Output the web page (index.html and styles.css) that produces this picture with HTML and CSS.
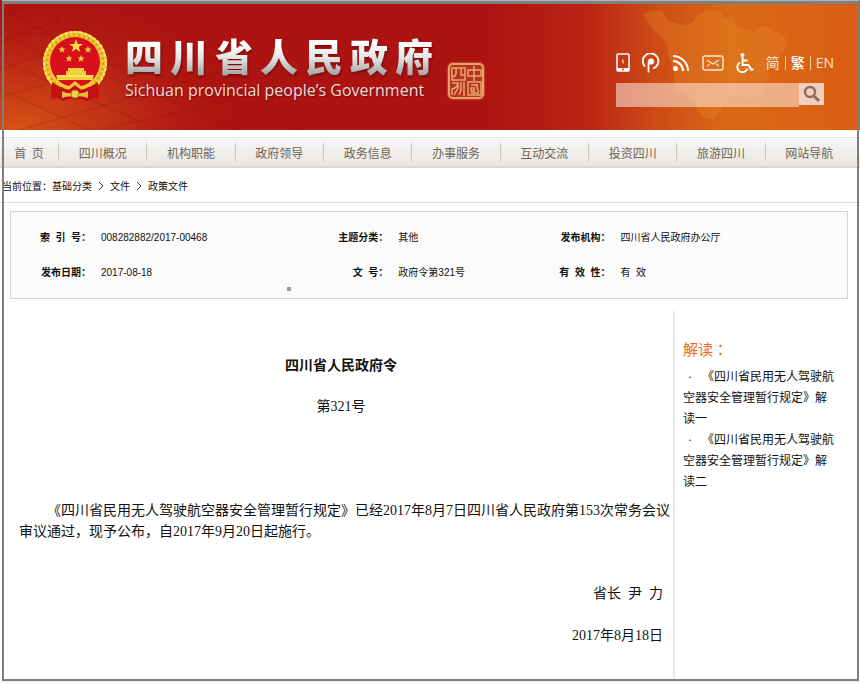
FILE: index.html
```html
<!DOCTYPE html>
<html lang="zh-CN">
<head>
<meta charset="utf-8">
<title>四川省人民政府令</title>
<link rel="stylesheet" href="styles.css">
</head>
<body>
<div class="page">
  <header class="banner">
    <svg class="banner-art" viewBox="0 0 860 131" preserveAspectRatio="none" aria-hidden="true">
      <defs>
        <radialGradient id="glowLeft" gradientUnits="userSpaceOnUse" cx="20" cy="131" r="230" gradientTransform="translate(0 52) scale(1 .6)">
          <stop offset="0" stop-color="#d65416"/>
          <stop offset=".45" stop-color="#c43417" stop-opacity=".8"/>
          <stop offset="1" stop-color="#ad1411" stop-opacity="0"/>
        </radialGradient>
        <linearGradient id="glowRight" x1="0" x2="1">
          <stop offset="0" stop-color="#ad1411"/>
          <stop offset=".26" stop-color="#ba2414"/>
          <stop offset=".45" stop-color="#cd4c16"/>
          <stop offset=".65" stop-color="#d96915"/>
          <stop offset="1" stop-color="#da5d15"/>
        </linearGradient>
      </defs>
      <rect width="860" height="131" fill="#ad1411"/>
      <rect width="300" height="131" fill="url(#glowLeft)"/>
      <rect x="490" width="370" height="131" fill="url(#glowRight)"/>
      <g fill="none" stroke="#8e1208" stroke-opacity=".16" stroke-width="2">
        <path d="M0 18 40 2M0 42 60 20M0 70 95 38M0 98 160 52M20 131 220 72M100 131 270 92M190 131 320 105"/>
        <path d="M0 8 50 34 100 62 190 84 300 131M0 34 60 62 150 92 240 131M0 60 70 92 160 131M0 90 90 131M30 4 60 22"/>
      </g>
      <path fill="#e88a28" fill-opacity=".32" d="M643 15 650 10 662 11 668 21 684 26 694 22 697 15 706 10 721 11 723 18 733 18 737 28 753 32 760 26 770 28 786 39 786 49 777 57 779 66 768 70 770 80 760 84 762 96 748 100 733 95 726 101 720 112 713 121 702 119 695 104 686 96 674 91 674 73 669 58 667 43 657 34 650 25Z"/>
    </svg>

    <div class="brand">
      <svg class="emblem" viewBox="0 0 66 72" role="img" aria-label="国徽">
        <circle cx="33" cy="33" r="32" fill="#f3c62d"/>
        <circle cx="33" cy="33" r="28" fill="none" stroke="#d3a02a" stroke-width="3" stroke-dasharray="2 3"/>
        <circle cx="33" cy="33" r="31" fill="none" stroke="#fbea70" stroke-width="2" stroke-dasharray="3 2"/>
        <circle cx="33" cy="32" r="25" fill="#d8101b"/>
        <path fill="#f8dc3c" d="m34 9 1.700 5H41l-4.300 3.100L38.300 22 34 19l-4.300 3 1.600-4.900L27 14h5.300Z"/>
        <g fill="#f4d03c">
          <path id="star" d="m20 16 1 2.500h2.500l-2 1.700.8 2.600-2.300-1.600-2.300 1.600.8-2.600-2-1.700H19Z"/>
          <use href="#star" x="26"/><use href="#star" x="7" y="9"/><use href="#star" x="19" y="9"/>
          <path d="M26 38h16v3h2v4h7v5H15v-5h9v-4h2Z"/>
        </g>
        <path d="M14 46h38" stroke="#fff19a"/>
        <path d="M10 52 9 69l6-1 6 3 6-2h12l6 2 6-3 6 1-1-17-8 5H18Z" fill="#c4100f"/>
        <path d="M15 51q8 8 12 7l6-5 6 5q4 1 12-7" fill="none" stroke="#edc437" stroke-width="3"/>
        <path d="M20 61q7 4 13 1 6 3 13-1v7q-7-3-13-1-6-2-13 1Z" fill="#e8c040"/>
        <circle cx="33" cy="64" r="4" fill="#f1d04a" stroke="#b8860e"/>
      </svg>
      <div class="brand-text">
        <h1 class="site-name"><span>四</span><span>川</span><span>省</span><span>人</span><span>民</span><span>政</span><span>府</span></h1>
        <p class="site-name-en">Sichuan provincial people’s Government</p>
      </div>
      <svg class="seal" viewBox="0 0 38 38" role="img" aria-label="中国四川">
        <rect x="2" y="2" width="34" height="34" rx="4" fill="#b7331d" stroke="#e9a068" stroke-width="2"/>
        <g fill="none" stroke="#e6a871" stroke-width="1.500">
          <path d="M5 6h13v12H5ZM9 6v5q0 3-3 4M14 6v7h4M21 8h13v6H21ZM27 4v15M5 21h6q-1 5-6 6v6M11 21v5l-4 7M14 20v8l-2 5M17 20v14M21 20h13v13H21ZM24 23h7M24 26h3v3h-3ZM30 22v4l2 4M24 31h8"/>
        </g>
      </svg>
    </div>

    <div class="tools">
      <nav class="quick" aria-label="快捷入口">
        <a href="#" aria-label="手机版"><svg width="14" height="20" viewBox="0 0 14 20"><rect x="1" y="1" width="12" height="17" rx="1" fill="none" stroke="#fff" stroke-width="1.500"/><path d="M1 15h12v3H1Z" fill="#fff"/><path d="M7 6 6 9l2-1-1 3" fill="none" stroke="#f3c0a0"/><circle cx="7" cy="16.500" r="1" fill="#c33c16"/></svg></a>
        <a href="#" aria-label="微博"><svg width="18" height="20" viewBox="0 0 18 20"><path d="M3 13.500A7.800 7.800 0 1 1 11 15.500M6.500 19.500V9" fill="none" stroke="#fff" stroke-width="1.800"/><circle cx="9" cy="8.500" r="3" fill="#fff"/></svg></a>
        <a href="#" aria-label="RSS订阅"><svg width="18" height="18" viewBox="0 0 18 18"><circle cx="3.500" cy="14.500" r="2.500" fill="#fff"/><path d="M1 7a10 10 0 0 1 10 10M1 2a15 15 0 0 1 15 15" fill="none" stroke="#fff" stroke-width="2"/></svg></a>
        <a href="#" aria-label="邮箱"><svg width="22" height="16" viewBox="0 0 22 16"><rect x="1" y="1" width="20" height="14" rx="2" fill="none" stroke="#fbe3cd" stroke-width="1.500"/><path d="m5 5 6 4 6-4M5 11l3-2M17 11l-3-2" fill="none" stroke="#fbe3cd" stroke-width="1.200"/></svg></a>
        <a href="#" aria-label="无障碍"><svg width="18" height="20" viewBox="0 0 18 20"><circle cx="6.500" cy="2" r="2" fill="#fff"/><path d="M6.500 4v8h6l3 5 2-1M6.500 7.500h5M4 9.500a5.200 5.200 0 1 0 7.500 6" fill="none" stroke="#fff" stroke-width="1.900"/></svg></a>
        <span class="langs"><a href="#">简</a><i></i><a href="#" class="on">繁</a><i></i><a href="#">EN</a></span>
      </nav>
      <form class="search">
        <input type="text" aria-label="搜索">
        <button type="button" aria-label="搜索"><svg width="18" height="18" viewBox="0 0 18 18"><circle cx="7" cy="7" r="5" fill="none" stroke="#96695a" stroke-width="2.400"/><path d="m11 11 5 5" stroke="#96695a" stroke-width="3"/></svg></button>
      </form>
    </div>
  </header>

  <nav class="menu" aria-label="主导航">
    <a href="#" class="home">首&nbsp; 页</a>
    <a href="#">四川概况</a>
    <a href="#">机构职能</a>
    <a href="#">政府领导</a>
    <a href="#">政务信息</a>
    <a href="#">办事服务</a>
    <a href="#">互动交流</a>
    <a href="#">投资四川</a>
    <a href="#">旅游四川</a>
    <a href="#">网站导航</a>
  </nav>

  <div class="crumbs">
    <span>当前位置：</span><a href="#">基础分类</a><svg width="6" height="8" viewBox="0 0 6 8"><path d="m1 0 4 4-4 4" fill="none" stroke="#333"/></svg><a href="#">文件</a><svg width="6" height="8" viewBox="0 0 6 8"><path d="m1 0 4 4-4 4" fill="none" stroke="#333"/></svg><a href="#">政策文件</a>
  </div>

  <section class="meta">
    <table>
      <colgroup>
        <col class="label"><col class="wide"><col class="label"><col class="mid"><col class="label"><col>
      </colgroup>
      <tr>
        <th scope="row">索&nbsp; 引&nbsp; 号：</th><td>008282882/2017-00468</td>
        <th scope="row">主题分类：</th><td>其他</td>
        <th scope="row">发布机构：</th><td>四川省人民政府办公厅</td>
      </tr>
      <tr>
        <th scope="row">发布日期：</th><td>2017-08-18</td>
        <th scope="row">文&nbsp; 号：</th><td>政府令第321号</td>
        <th scope="row">有&nbsp; 效&nbsp; 性：</th><td>有&nbsp; 效</td>
      </tr>
    </table>
    <span class="dot"></span>
  </section>

  <div class="content">
    <article class="decree">
      <h2>四川省人民政府令</h2>
      <p class="number">第321号</p>
      <p class="text">《四川省民用无人驾驶航空器安全管理暂行规定》已经2017年8月7日四川省人民政府第153次常务会议审议通过，现予公布，自2017年9月20日起施行。</p>
      <p class="sign">省长&nbsp; 尹&nbsp; 力</p>
      <p class="sign">2017年8月18日</p>
    </article>
    <aside class="related">
      <h3>解读：</h3>
      <ul>
        <li><a href="#">《四川省民用无人驾驶航空器安全管理暂行规定》解读一</a></li>
        <li><a href="#">《四川省民用无人驾驶航空器安全管理暂行规定》解读二</a></li>
      </ul>
    </aside>
  </div>
</div>
</body>
</html>
```
FILE: styles.css
```css
* {
  box-sizing: border-box;
}

body {
  margin: 0;
  background: #fff;
  color: #111;
  font-family: "Liberation Serif", "Noto Sans CJK SC", sans-serif;
}

h1, h2, h3, p, ul {
  margin: 0;
  padding: 0;
}

a {
  color: inherit;
  text-decoration: none;
}

svg {
  display: block;
}

.page {
  position: relative;
  display: flex;
  flex-direction: column;
  min-height: 100vh;
}

/* grey window frame drawn over the page edges */
.page::after {
  content: "";
  position: absolute;
  inset: 1px 1px 2px 2px;
  border: 2px solid #7f7f7f;
  border-top-width: 3px;
  box-shadow: 0 -1px #b4b4b4, 0 2px #eee;
  pointer-events: none;
}

/* banner */
.banner {
  position: relative;
  display: flex;
  justify-content: space-between;
  height: 130px;
  padding: 0 26px 0 42px;
}

.banner-art {
  position: absolute;
  inset: 0;
  width: 100%;
  height: 100%;
}

.brand {
  position: relative;
  display: flex;
  align-items: flex-start;
}

.emblem {
  width: 66px;
  height: 72px;
  margin-top: 30px;
}

.brand-text {
  margin: 36px 0 0 17px;
}

.site-name {
  display: flex;
  gap: 7px;
  font: 900 38px/44px "Liberation Sans", "Noto Sans CJK SC", sans-serif;
  color: transparent;
  background: linear-gradient(#fff 20%, #e4e4e4 50%, #a9a9a9 85%);
  background-clip: text;
  filter: drop-shadow(1px 2px 1px rgba(80, 0, 0, .5));
}

.site-name-en {
  margin-top: 2px;
  font: 500 16px/16px "Open Sans", sans-serif;
  color: #e8dcdb;
  white-space: nowrap;
  text-shadow: 1px 1px 1px #7a0c0a;
}

.seal {
  width: 38px;
  height: 38px;
  margin: 62px 0 0 14px;
  filter: drop-shadow(0 0 1px #e58a55);
}

.tools {
  position: relative;
  display: flex;
  flex-direction: column;
  gap: 10px;
  padding-top: 53px;
}

.quick {
  display: flex;
  align-items: center;
  gap: 12px;
  height: 20px;
}

.langs {
  display: flex;
  align-items: center;
  gap: 5px;
  font: 14px/20px "Open Sans", "Noto Sans CJK SC", sans-serif;
  color: #fbe6d3;
}

.langs i {
  width: 1px;
  height: 14px;
  background: #f3cba6;
}

.langs .on {
  font-weight: 500;
  color: #fff;
}

.search {
  display: flex;
  align-items: flex-start;
  align-self: flex-end;
  width: 208px;
  margin-right: 10px;
}

.search input {
  flex: 1;
  min-width: 0;
  height: 24px;
  padding: 0 6px;
  border: 0;
  background: rgba(255, 235, 225, .55);
}

.search button {
  display: grid;
  place-items: center;
  width: 25px;
  height: 22px;
  padding: 0;
  border: 0;
  background: #efcfc0;
}

/* main menu */
.menu {
  display: flex;
  height: 31px;
  margin-top: 7px;
  padding-right: 7px;
  border-top: 1px solid #e4e2df;
  border-bottom: 2px solid #dcd8d0;
  background: linear-gradient(#f8f7f6, #e9e6e2);
  font: 12px/30px "Noto Sans CJK SC", sans-serif;
  color: #6d6553;
}

.menu a {
  flex: 1;
  text-align: center;
  border-left: 1px solid #cfcac2;
  border-image: linear-gradient(transparent 10%, #c9c4bb 30%, #c9c4bb 70%, transparent 90%) 1;
}

.menu .home {
  flex: 0 0 58px;
  border: 0;
}

/* breadcrumb */
.crumbs {
  display: flex;
  align-items: center;
  gap: 6px;
  height: 35px;
  padding: 2px 0 0 2px;
  border-bottom: 1px solid #ddd;
  font: 10px/16px "Noto Sans CJK SC", sans-serif;
}

.crumbs span {
  margin-right: -6px;
}

/* document properties */
.meta {
  position: relative;
  margin: 8px 12px 0 10px;
  padding: 8px 0;
  border: 1px solid #d3d3d3;
  background: #fbfbfb;
}

.meta table {
  width: 100%;
  table-layout: fixed;
  border-collapse: collapse;
  font: 10px/16px "Liberation Sans", "Noto Sans CJK SC", sans-serif;
}

.meta .label {
  width: 80px;
}

.meta .wide {
  width: 26%;
}

.meta .mid {
  width: 17%;
}

.meta th,
.meta td {
  height: 35px;
  padding: 0;
  text-align: left;
}

.meta th {
  text-align: right;
}

.meta td {
  padding-left: 10px;
}

.meta .dot {
  position: absolute;
  left: 33%;
  bottom: 7px;
  width: 4px;
  height: 4px;
  background: #999;
}

/* decree and side column */
.content {
  flex: 1;
  display: flex;
  margin: 12px 4px 0 5px;
}

.decree {
  flex: 1;
  padding: 44px 10px 0 14px;
  font-size: 14px;
  line-height: 21px;
}

.decree h2 {
  font-size: 14px;
  text-align: center;
}

.decree .number {
  margin: 20px 0 83px;
  text-align: center;
}

.decree .text {
  margin: 0 -9px 41px 0;
  text-indent: 2em;
}

.decree .sign {
  margin-bottom: 21px;
  text-align: right;
}

.related {
  flex: 0 0 183px;
  padding: 27px 20px 0 8px;
  border-left: 2px solid #e8e8e8;
}

.related h3 {
  font: 15px/22px "Noto Sans CJK TC", sans-serif;
  font-feature-settings: "locl" 0;
  color: #f26a1b;
}

.related ul {
  margin-top: 7px;
  list-style: none;
  font-size: 12px;
  line-height: 21px;
}

.related li::before {
  content: "·";
  padding: 0 16px 0 5px;
}
```
